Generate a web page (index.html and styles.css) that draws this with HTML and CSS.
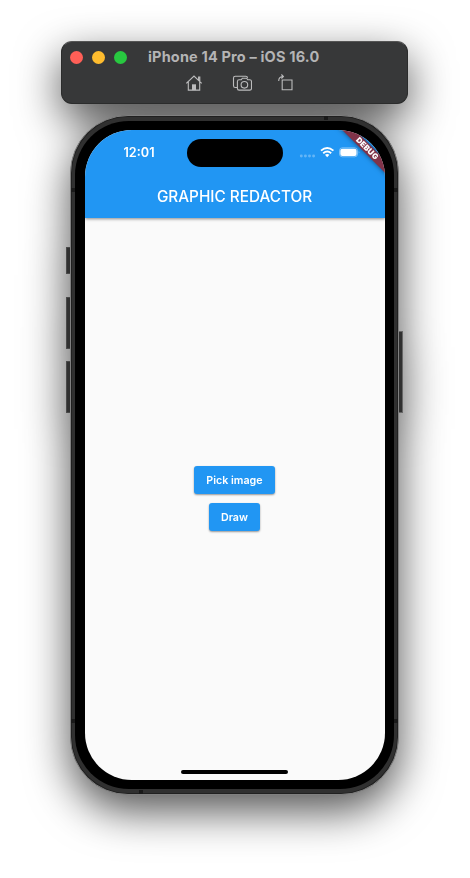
FILE: index.html
```html
<!DOCTYPE html>
<html lang="en">
<head>
<meta charset="utf-8">
<title>iPhone 14 Pro – iOS 16.0</title>
<link rel="stylesheet" href="styles.css">
</head>
<body>
<main class="simulator">
  <header class="toolbar">
    <div class="titlebar">
      <div class="lights"><i class="light close"></i><i class="light minimize"></i><i class="light zoom"></i></div>
      <span class="window-title">iPhone 14 Pro – iOS 16.0</span>
    </div>
    <div class="tools">
      <svg class="tool" width="20" height="20" viewBox="0 0 20 20"><path d="M2.300 10.300 10 3l7.700 7.300M4.300 9v8.100h11.400V9M14.600 6.900V4h1.200v4"/><path class="solid" d="M8 11.300h4v5.800H8z"/></svg>
      <svg class="tool" width="20" height="20" viewBox="0 0 20 20"><path d="M5 14.500H3.300Q1.500 14.500 1.500 12.700V5Q1.500 3.200 3.300 3.200h10.500q1.600 0 1.800 1.700"/><path d="M7.100 6.800h2.200l1-1.500h4.400l1 1.500h2.100q1.700 0 1.700 1.700v6.900q0 1.700-1.700 1.700H7.100q-1.700 0-1.700-1.700V8.500q0-1.700 1.700-1.700z"/><circle cx="12.400" cy="11.800" r="3.300"/></svg>
      <svg class="tool" width="20" height="20" viewBox="0 0 20 20"><path d="M7.200 7h9.800v9.800H7.200zM3.700 8q0-4.500 4.600-4.500M6.400 1.500l2 2-2 2"/></svg>
    </div>
  </header>
  <section class="phone">
    <i class="side-key mute"></i><i class="side-key volume-up"></i><i class="side-key volume-down"></i><i class="side-key power"></i>
    <i class="seam seam-tl"></i><i class="seam seam-tr"></i><i class="seam seam-bl"></i><i class="seam seam-br"></i><i class="seam seam-top"></i><i class="seam seam-bottom"></i>
    <div class="bezel">
      <div class="screen">
        <div class="appbar">
          <div class="status">
            <span class="clock">12:01</span>
            <span class="island"></span>
            <svg class="signals" width="64" height="14" viewBox="0 0 64 14">
              <g fill="#fff" opacity=".3"><circle cx="4.300" cy="10" r="1.450"/><circle cx="8.400" cy="10" r="1.450"/><circle cx="12.500" cy="10" r="1.450"/><circle cx="16.600" cy="10" r="1.450"/></g>
              <g fill="none" stroke="#fff" stroke-width="1.900"><path d="M24 4.600q6.200-5.300 12.400 0M26.200 7.200q4-3.400 8 0"/></g>
              <path fill="#fff" d="M28 8.800q2.200-1.600 4.400 0l-2.200 2.500z"/>
              <rect x="42.500" y="1.800" width="18" height="9" rx="2.800" fill="none" stroke="#fff" stroke-opacity=".4"/>
              <rect x="43.300" y="2.700" width="16.300" height="7.200" rx="2" fill="#fff"/>
              <path d="M61.700 5q1.700 1.300 0 2.600z" fill="#fff" opacity=".45"/>
            </svg>
          </div>
          <h1 class="app-title">GRAPHIC REDACTOR</h1>
        </div>
        <div class="content">
          <button class="button">Pick image</button>
          <button class="button">Draw</button>
        </div>
        <i class="home-indicator"></i>
        <div class="debug">DEBUG</div>
      </div>
    </div>
  </section>
</main>
</body>
</html>
```
FILE: styles.css
```css
* { box-sizing: border-box; }
body {
  margin: 0;
  background: #fff;
  font-family: Inter, "Liberation Sans", sans-serif;
}
.simulator {
  height: 878px;
  overflow: hidden;
  display: flex;
  flex-direction: column;
  align-items: center;
  gap: 11px;
  padding: 41px 1px 0 0;
  filter: drop-shadow(0 16px 22px rgba(0, 0, 0, .68));
}
.toolbar {
  width: 347px;
  height: 63px;
  flex: none;
  border-radius: 11px;
  background: #373839;
  border: 1px solid #2b2c2c;
  border-top-color: #555;
}
.titlebar {
  display: flex;
  align-items: center;
  height: 30px;
  padding-left: 8px;
}
.lights { display: flex; gap: 9px; margin-right: 21px; }
.light { width: 13px; height: 13px; border-radius: 50%; }
.close { background: #ff5f57; }
.minimize { background: #febc2e; }
.zoom { background: #28c840; }
.window-title {
  font-size: 14.5px;
  font-weight: 700;
  letter-spacing: .17px;
  color: #b4b4b5;
  white-space: nowrap;
  transform: translateY(-1px);
}
.tools {
  display: flex;
  gap: 28px;
  padding: 1px 0 0 122px;
}
.tool {
  fill: none;
  stroke: #bcbcbd;
  stroke-width: 1.1;
}
.tool:last-child { margin-left: -5px; }
.tool .solid { fill: #bcbcbd; stroke: none; }
.phone {
  position: relative;
  width: 329px;
  height: 680px;
  flex: none;
  padding: 5px 4px;
  border: 1px solid #808080;
  border-radius: 58px;
  background: #303030;
  box-shadow: inset 0 0 0 1px #202020;
}
.side-key {
  position: absolute;
  width: 4px;
  background: #303030;
  border: 1px solid #494949;
  border-right: 0;
  border-radius: 1px 0 0 1px;
  left: -5px;
}
.mute { top: 131px; height: 27px; }
.volume-up { top: 181px; height: 52px; }
.volume-down { top: 245px; height: 52px; }
.power {
  left: auto;
  right: -5px;
  top: 215px;
  height: 82px;
  border: 1px solid #666;
  border-left: 0;
  border-radius: 0 1px 1px 0;
}
.seam { position: absolute; width: 4px; height: 4px; background: #191919; }
.seam-tl { left: 0; top: 72px; }
.seam-tr { right: 0; top: 72px; }
.seam-bl { left: 0; bottom: 71px; }
.seam-br { right: 0; bottom: 71px; }
.seam-top { right: 70px; top: 0; }
.seam-bottom { left: 68px; bottom: 0; }
.bezel {
  position: relative;
  height: 100%;
  padding: 9px 9px 9px 10px;
  border-radius: 54px;
  background: #000;
}
.screen {
  position: relative;
  display: flex;
  flex-direction: column;
  height: 100%;
  overflow: hidden;
  border-radius: 47px;
  background: #fafafa;
}
.appbar {
  height: 88px;
  flex: none;
  background: #2196f3;
  color: #fff;
  box-shadow: 0 1px 3px rgba(0, 0, 0, .45);
}
.status {
  display: grid;
  grid-template-columns: 102px 96px 102px;
  align-items: center;
  height: 45px;
}
.clock {
  padding-left: 38.5px;
  font-size: 12.7px;
  font-weight: 600;
}
.island {
  height: 28px;
  border-radius: 14px;
  background: #000;
}
.signals { margin-left: 14px; }
.app-title {
  margin: 0;
  height: 43px;
  line-height: 43px;
  padding-right: 1px;
  text-align: center;
  font-size: 15.3px;
  font-weight: 500;
}
.content {
  flex: 1;
  display: flex;
  flex-direction: column;
  align-items: center;
  justify-content: center;
  gap: 9px;
  padding: 9px 1px 0 0;
}
.button {
  height: 28px;
  padding: 0 12px;
  border: 0;
  border-radius: 3px;
  background: #2196f3;
  color: #fff;
  font: 600 10.7px Inter, "Liberation Sans", sans-serif;
  box-shadow: 0 1px 2px rgba(0, 0, 0, .4);
}
.home-indicator {
  width: 107px;
  height: 4px;
  flex: none;
  align-self: center;
  margin: 0 1px 6px 0;
  border-radius: 2px;
  background: #000;
}
.debug {
  position: absolute;
  top: 13.5px;
  left: 241.5px;
  width: 80px;
  height: 9.2px;
  transform: rotate(45deg);
  line-height: 9.2px;
  text-align: center;
  font-size: 7.8px;
  font-weight: 900;
  letter-spacing: .15px;
  color: #fff;
  background: #803349;
  box-shadow: 0 0 5px rgba(0, 0, 0, .5);
}
```
